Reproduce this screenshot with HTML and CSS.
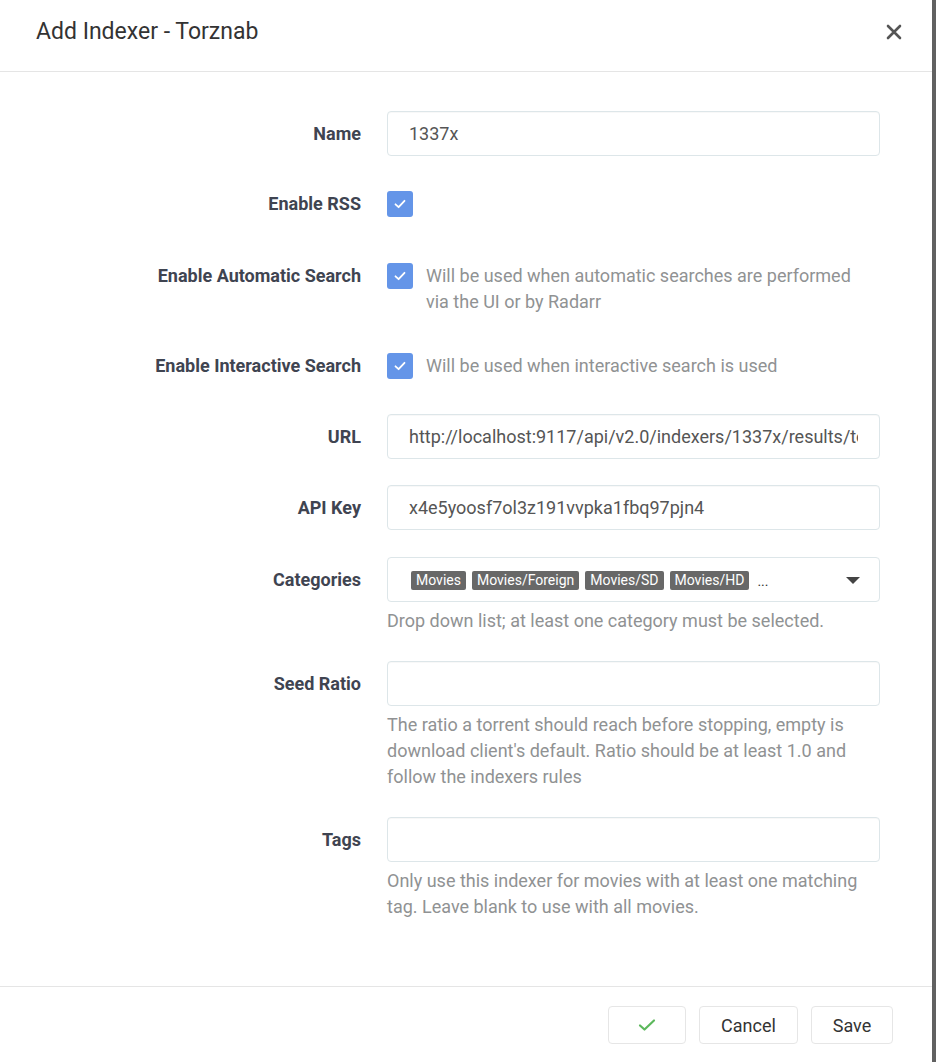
FILE: index.html
```html
<!DOCTYPE html>
<html lang="en">
<head>
    <meta charset="UTF-8">
    <title>Add Indexer - Torznab</title>
    <link rel="stylesheet" href="styles.css">
</head>
<body>
    <div class="page">
        <div class="modal">
            <div class="modal-header">
                <h1>Add Indexer - Torznab</h1>
                <button class="btn-close" aria-label="Close">
                    <svg width="16" height="16" viewBox="0 0 16 16">
                        <path d="M2 2 L14 14 M14 2 L2 14" stroke="#555" stroke-width="2.6" stroke-linecap="round"/>
                    </svg>
                </button>
            </div>

            <div class="modal-body">
                <div class="form-group">
                    <label class="form-label">Name</label>
                    <div class="field">
                        <input class="text-input" type="text" value="1337x">
                    </div>
                </div>

                <div class="form-group check-group">
                    <label class="form-label">Enable RSS</label>
                    <div class="field check-field">
                        <span class="checkbox"><svg width="14" height="14" viewBox="0 0 14 14"><path d="M2.5 7.3 L5.6 10.2 L11.5 3.8" fill="none" stroke="#fff" stroke-width="1.8" stroke-linecap="round" stroke-linejoin="round"/></svg></span>
                    </div>
                </div>

                <div class="form-group check-group">
                    <label class="form-label">Enable Automatic Search</label>
                    <div class="field check-field">
                        <span class="checkbox"><svg width="14" height="14" viewBox="0 0 14 14"><path d="M2.5 7.3 L5.6 10.2 L11.5 3.8" fill="none" stroke="#fff" stroke-width="1.8" stroke-linecap="round" stroke-linejoin="round"/></svg></span>
                        <span class="check-help">Will be used when automatic searches are performed via the UI or by Radarr</span>
                    </div>
                </div>

                <div class="form-group check-group last-check">
                    <label class="form-label">Enable Interactive Search</label>
                    <div class="field check-field">
                        <span class="checkbox"><svg width="14" height="14" viewBox="0 0 14 14"><path d="M2.5 7.3 L5.6 10.2 L11.5 3.8" fill="none" stroke="#fff" stroke-width="1.8" stroke-linecap="round" stroke-linejoin="round"/></svg></span>
                        <span class="check-help">Will be used when interactive search is used</span>
                    </div>
                </div>

                <div class="form-group">
                    <label class="form-label">URL</label>
                    <div class="field">
                        <input class="text-input" type="text" value="http://localhost:9117/api/v2.0/indexers/1337x/results/torznab/">
                    </div>
                </div>

                <div class="form-group spaced">
                    <label class="form-label">API Key</label>
                    <div class="field">
                        <input class="text-input" type="text" value="x4e5yoosf7ol3z191vvpka1fbq97pjn4">
                    </div>
                </div>

                <div class="form-group spaced">
                    <label class="form-label">Categories</label>
                    <div class="field">
                        <div class="select-input">
                            <div class="tags">
                                <span class="tag">Movies</span>
                                <span class="tag">Movies/Foreign</span>
                                <span class="tag">Movies/SD</span>
                                <span class="tag">Movies/HD</span>
                                <span class="more">...</span>
                            </div>
                            <span class="caret"></span>
                        </div>
                        <div class="help-text">Drop down list; at least one category must be selected.</div>
                    </div>
                </div>

                <div class="form-group spaced">
                    <label class="form-label">Seed Ratio</label>
                    <div class="field">
                        <input class="text-input" type="text" value="">
                        <div class="help-text">The ratio a torrent should reach before stopping, empty is download client's default. Ratio should be at least 1.0 and follow the indexers rules</div>
                    </div>
                </div>

                <div class="form-group">
                    <label class="form-label">Tags</label>
                    <div class="field">
                        <input class="text-input" type="text" value="">
                        <div class="help-text">Only use this indexer for movies with at least one matching tag. Leave blank to use with all movies.</div>
                    </div>
                </div>
            </div>

            <div class="modal-footer">
                <button class="btn btn-test">
                    <svg width="18" height="14" viewBox="0 0 18 14"><path d="M2 7.5 L6.5 11.5 L16 2.5" fill="none" stroke="#5cb85c" stroke-width="2.2" stroke-linecap="round" stroke-linejoin="round"/></svg>
                </button>
                <button class="btn btn-cancel">Cancel</button>
                <button class="btn btn-save">Save</button>
            </div>
        </div>
        <div class="side-bar"></div>
    </div>
</body>
</html>
```

FILE: styles.css
```css
html, body {
    margin: 0;
    padding: 0;
    background: #fff;
}
body {
    font-family: Roboto, "Open Sans", Arial, sans-serif;
    color: #3a3f51;
}
.page {
    display: flex;
    height: 1062px;
}
.modal {
    width: 932px;
    display: flex;
    flex-direction: column;
    background: #fff;
}
.side-bar {
    width: 4px;
    background: #616161;
}
.modal-header {
    box-sizing: border-box;
    height: 72px;
    display: flex;
    align-items: center;
    justify-content: space-between;
    padding: 0 30px 8px 36px;
    border-bottom: 1px solid #e5e5e5;
}
.modal-header h1 {
    margin: 0;
    font-size: 23px;
    font-weight: 400;
    color: #333;
}
.btn-close {
    border: none;
    background: none;
    padding: 0;
    width: 16px;
    height: 16px;
    cursor: pointer;
    display: flex;
}
.modal-body {
    flex: 1;
    padding: 39px 0 0 0;
}
.form-group {
    display: grid;
    grid-template-columns: 361px 493px;
    column-gap: 26px;
    margin-bottom: 26px;
}
.form-group.spaced {
    margin-bottom: 27px;
}
.form-group.last-check {
    margin-bottom: 24px;
}
.form-label {
    text-align: right;
    font-size: 18px;
    font-weight: 700;
    line-height: 45px;
    color: #3f4451;
}
.check-group .form-label {
    line-height: 44px;
}
.text-input {
    box-sizing: border-box;
    width: 100%;
    height: 45px;
    padding: 0 21px;
    border: 1px solid #dde6e9;
    border-radius: 4px;
    font-family: Roboto, Arial, sans-serif;
    font-size: 18px;
    color: #555;
    background: #fff;
    outline: none;
    box-shadow: inset 0 1px 1px rgba(0, 0, 0, 0.03);
}
.check-field {
    display: flex;
    align-items: flex-start;
    min-height: 46px;
}
.checkbox {
    flex: none;
    width: 26px;
    height: 26px;
    margin-top: 9px;
    border-radius: 3px;
    background: #6495e8;
    display: flex;
    align-items: center;
    justify-content: center;
}
.check-help {
    margin: 9px 24px 3px 13px;
    font-size: 18px;
    line-height: 26px;
    color: #909293;
}
.help-text {
    margin-top: 6px;
    font-size: 18px;
    line-height: 26px;
    color: #909293;
}
.select-input {
    box-sizing: border-box;
    height: 45px;
    border: 1px solid #dde6e9;
    border-radius: 4px;
    display: flex;
    align-items: center;
    justify-content: space-between;
    padding: 2px 19px 0 23px;
}
.tags {
    display: flex;
    align-items: center;
    gap: 6px;
}
.tag {
    background: #686868;
    color: #fff;
    font-size: 14px;
    line-height: 19px;
    padding: 0 5px;
    border-radius: 2px;
}
.more {
    font-size: 14px;
    color: #333;
    margin-left: 2px;
}
.caret {
    width: 0;
    height: 0;
    border-left: 7px solid transparent;
    border-right: 7px solid transparent;
    border-top: 7px solid #444;
}
.modal-footer {
    border-top: 1px solid #e5e5e5;
    padding: 19px 39px 18px 0;
    display: flex;
    justify-content: flex-end;
    gap: 13px;
}
.btn {
    height: 38px;
    border: 1px solid #e6e6e6;
    border-radius: 4px;
    background: #fff;
    font-family: Roboto, Arial, sans-serif;
    font-size: 18px;
    color: #333;
    padding: 0 22px;
    cursor: pointer;
    display: flex;
    align-items: center;
    justify-content: center;
}
.btn-test {
    width: 78px;
}
.btn-cancel {
    width: 99px;
}
.btn-save {
    width: 82px;
}
```
